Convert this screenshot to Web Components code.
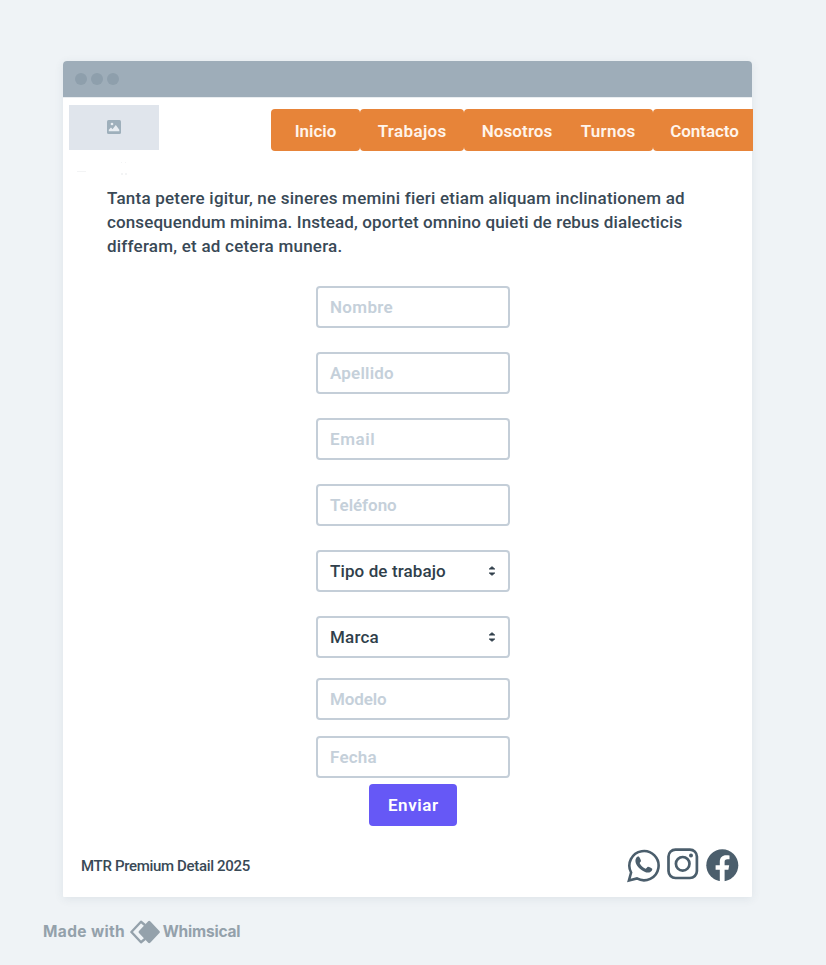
<!DOCTYPE html>
<html lang="es">
<head>
<meta charset="utf-8">
<title>MTR Premium Detail</title>
<style>
html,body{margin:0;height:100%}
body{background:#eff3f6;overflow:hidden;font:500 17px/24px Roboto,"Open Sans",sans-serif;color:#394956}
</style>
</head>
<body>
<app-frame>
  <browser-window>
    <site-header>
      <image-slot></image-slot>
      <site-nav>
        <nav-button style="width:89px"><fit-text w="41">Inicio</fit-text></nav-button>
        <nav-button style="width:104px"><fit-text w="68">Trabajos</fit-text></nav-button>
        <nav-button style="width:106px"><fit-text w="70">Nosotros</fit-text></nav-button>
        <nav-button style="width:90px;margin-left:-7px"><fit-text w="54">Turnos</fit-text></nav-button>
        <nav-button style="width:103px"><fit-text w="68">Contacto</fit-text></nav-button>
      </site-nav>
    </site-header>
    <intro-text>
      <fit-text w="576.5">Tanta petere igitur, ne sineres memini fieri etiam aliquam inclinationem ad</fit-text>
      <fit-text w="574.5">consequendum minima. Instead, oportet omnino quieti de rebus dialecticis</fit-text>
      <fit-text w="234.5">differam, et ad cetera munera.</fit-text>
    </intro-text>
    <booking-form>
      <form-field><fit-text w="62">Nombre</fit-text></form-field>
      <form-field><fit-text w="63">Apellido</fit-text></form-field>
      <form-field><fit-text w="44">Email</fit-text></form-field>
      <form-field><fit-text w="66">Teléfono</fit-text></form-field>
      <form-field select><fit-text w="115">Tipo de trabajo</fit-text></form-field>
      <form-field select><fit-text w="48">Marca</fit-text></form-field>
      <form-field style="margin-top:-4px"><fit-text w="56">Modelo</fit-text></form-field>
      <form-field style="margin-top:-8px"><fit-text w="46">Fecha</fit-text></form-field>
      <submit-button style="margin-top:-18px"><fit-text w="49.5">Enviar</fit-text></submit-button>
    </booking-form>
    <site-footer><fit-text w="168.5">MTR Premium Detail 2025</fit-text><social-links slot="links"></social-links></site-footer>
  </browser-window>
  <made-with></made-with>
</app-frame>
<script>
const define = (name, html, setup) => {
  const template = document.createElement('template');
  template.innerHTML = html;
  customElements.define(name, class extends HTMLElement {
    connectedCallback() {
      if (this.shadowRoot) return;
      this.attachShadow({mode: 'open'}).append(template.content.cloneNode(true));
      if (setup) setup(this);
    }
  });
};

define('app-frame', `<style>:host{display:block;padding:61px 0 0 63px}</style><slot></slot>`);

define('browser-window', `<style>
:host{display:flex;flex-direction:column;width:689.4px;height:836px;background:#fff;border-radius:4px 4px 1px 1px;box-shadow:0 2px 10px rgba(57,76,96,.09)}
.bar{box-sizing:border-box;height:36px;flex:none;background:#9eadb9;border-radius:4px 4px 0 0;display:flex;align-items:center;gap:4px;padding-left:12.4px}
i{width:12px;height:12px;border-radius:50%;background:#8e9fac}
</style><div class="bar"><i></i><i></i><i></i></div><slot></slot>`);

define('site-header', `<style>:host{display:flex;height:85px;flex:none;align-items:flex-start;padding:7px 0 0 6px;box-sizing:border-box;border-top:1px solid #e9edf0}</style><slot></slot>`);

define('image-slot', `<style>:host{position:relative;display:flex;align-items:center;justify-content:center;width:90px;height:45px;background:#e0e5ec;flex:none}svg{display:block;margin-top:-1px}.edge{position:absolute;left:0;top:56px;margin:0}</style>
<svg width="14" height="14" viewBox="0 0 14 14"><rect width="14" height="14" rx="1.5" fill="#9eafbb"/><circle cx="5" cy="4" r="1.35" fill="#e8edf2"/><path d="M1.8 11.2V9.8L4 7.6l1.5 1.6L8.8 5l3.5 4.8v1.4z" fill="#e8edf2"/></svg>
<svg class="edge" width="60" height="14" fill="#f3f4f5"><path d="M8 10h9v1H8zM52 12h2v2h-2zM56 12h2v2h-2zM52 1h1v1h-1zM56 1h1v1h-1z"/></svg>`);

define('site-nav', `<style>:host{display:flex;margin:4px 0 0 112px;width:482px;overflow:hidden;flex:none}</style><slot></slot>`);

define('nav-button', `<style>:host{display:flex;flex:none;box-sizing:border-box;height:42px;align-items:center;justify-content:center;background:#e78439;border-radius:4px;color:#fff4eb;font-weight:600;padding-top:2px}</style><slot></slot>`);

define('intro-text', `<style>:host{display:block;margin:4px 0 0 44px;height:100px;flex:none;font-weight:500}</style><slot></slot>`);

define('booking-form', `<style>:host{display:flex;flex-direction:column;align-items:center;gap:24px;width:194px;margin-left:253px;flex:none}</style><slot></slot>`);

define('form-field', `<style>
:host{display:flex;align-items:center;justify-content:space-between;box-sizing:border-box;width:194px;height:42px;flex:none;border:2px solid #c4ced8;border-radius:4px;padding:0 12px 1px;color:#c5d0da;font-weight:600}
:host([select]){color:#303f4b;font-weight:500}
svg{display:none}:host([select]) svg{display:block;margin:0}
</style><slot></slot><svg width="8" height="12" viewBox="0 0 8 12"><path d="M1.3 4L4 1.7 6.7 4zM1.3 8L4 10.3 6.7 8z" fill="#303f4b" stroke="#303f4b" stroke-width="1" stroke-linejoin="round"/></svg>`);

define('submit-button', `<style>:host{display:flex;align-items:center;justify-content:center;box-sizing:border-box;width:88px;height:42px;padding-bottom:1px;border-radius:4px;background:#6658f6;color:#fff;font-weight:600}</style><slot></slot>`);

define('site-footer', `<style>:host{display:flex;justify-content:space-between;margin:21px 14px 0 18px;font-size:15px;font-weight:500;color:#394956}.t{padding-top:7px}</style><div class="t"><slot></slot></div><slot name="links"></slot>`);

define('social-links', `<style>:host{display:flex;gap:7px;margin-right:-.6px}svg{display:block}</style>
<svg width="33" height="36" viewBox="0 0 33 36" fill="none" stroke="#4b5e6c" stroke-width="2.6"><path d="M1.9 33.5l2.2-8A14.6 14.6 0 1 1 9.9 31.4z" stroke-linejoin="miter"/><path d="M9.2 11c.7-1.4 2.2-1.9 3-1.1.5.6 1.7 3.1 1.8 3.8.2.9-1.5 1.8-1.3 2.6 1.2 2.7 3.3 4.4 5.9 5.4.9.2 1.6-2 2.5-1.9.8.1 3.7 1.5 4.1 2 .5 1.6-1.6 3.7-3.8 3.8-5.4 0-12.9-6.5-13-11.7 0-1 .3-2.1.8-2.9z" fill="#4b5e6c" stroke="none"/></svg>
<svg width="32" height="36" viewBox="0 0 32 36" fill="none" stroke="#4b5e6c" stroke-width="2.7"><rect x="1.5" y="2.6" width="28.4" height="28.4" rx="7"/><circle cx="15.7" cy="16.8" r="6.8"/><circle cx="24" cy="8.6" r="2" fill="#4b5e6c" stroke="none"/></svg>
<svg width="33" height="36" viewBox="0 0 33 36"><circle cx="16.3" cy="18.2" r="16" fill="#4b5e6c"/><path d="M13.8 35V22.7H9.6v-4.5h4.2v-3.4c0-4.3 2.5-6.6 6.3-6.6 1.4 0 2.6.1 3.4.3v3.8h-2.1c-2.1 0-2.8 1-2.8 2.7v3.2h4.6l-.8 4.5h-3.8V35z" fill="#fff"/></svg>`);

define('made-with', `<style>:host{display:flex;align-items:center;margin:23px 0 0 -20px;height:24px;font:700 15.5px/24px Inter,sans-serif;color:#94a1ab}svg{display:block;margin:0 3px 0 5px}fit-text{flex:none}</style>
<fit-text w="81">Made with</fit-text>
<svg width="30" height="24" viewBox="0 0 30 24"><path d="M15.2 5.2L11 1.8 1.4 12 11 22.2l4.2-3.4" fill="none" stroke="#94a1ab" stroke-width="2.4" stroke-linejoin="round"/><path d="M18.2 1.2q1-.9 2 0L29.4 11q.9 1 0 2l-9.2 9.8q-1 .9-2 0L9 13q-.9-1 0-2z" fill="#94a1ab"/></svg>
<fit-text w="77">Whimsical</fit-text>`);

// Sets a line of text to a given width; defined last, once every parent's font applies.
define('fit-text', `<style>:host{display:block;white-space:nowrap}span{display:inline-block}</style><span><slot></slot></span>`, el => {
  const span = el.shadowRoot.querySelector('span');
  const target = +el.getAttribute('w');
  const spacing = (target + .7 - span.getBoundingClientRect().width) / (el.textContent.length - 1);
  span.style.letterSpacing = spacing.toFixed(3) + 'px';
  span.style.marginRight = (-spacing).toFixed(3) + 'px';
});
</script>
</body>
</html>
